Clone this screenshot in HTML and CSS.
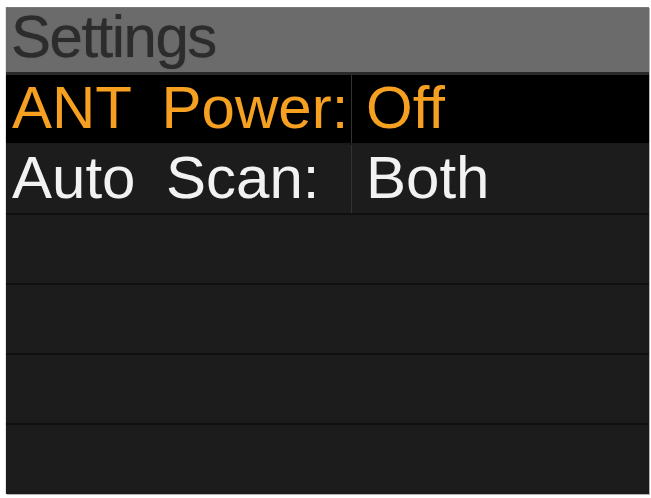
FILE: index.html
```html
<!DOCTYPE html>
<html lang="en">
<head>
    <meta charset="UTF-8">
    <meta name="viewport" content="width=device-width, initial-scale=1.0">
    <title>Settings</title>
    <link rel="stylesheet" href="styles.css">
</head>
<body>
    <div class="screen">
        <div class="title-bar">Settings</div>

        <ul class="menu">
            <li class="menu-row selected">
                <span class="label">ANT Power:</span>
                <span class="value">Off</span>
            </li>
            <li class="menu-row">
                <span class="label">Auto Scan:</span>
                <span class="value">Both</span>
            </li>
            <!-- unused slots -->
            <li class="menu-row empty"></li>
            <li class="menu-row empty"></li>
            <li class="menu-row empty"></li>
            <li class="menu-row empty last"></li>
        </ul>
    </div>
</body>
</html>
```

FILE: styles.css
```css
* {
    margin: 0;
    padding: 0;
    box-sizing: border-box;
}

body {
    background: #ffffff;
    font-family: 'Liberation Sans', Arial, sans-serif;
    padding: 7px 2px 4px 6px;
}

.screen {
    width: 643px;
    height: 487px;
    background: #1c1c1c;
    display: flex;
    flex-direction: column;
    box-shadow: 1px 1px 0 #b4b4b4, -1px 0 0 #e2e2e2;
}

.title-bar {
    height: 68px;
    background: #6b6b6b;
    border-top: 1px solid #7a7a7a;
    border-bottom: 3px solid #2a2a2a;
    color: #2c2c2c;
    font-size: 60px;
    line-height: 58px;
    letter-spacing: -1.5px;
    padding-left: 5px;
    text-shadow: 0 0 1px #3a3a3a;
}

.menu {
    list-style: none;
    flex: 1;
    display: flex;
    flex-direction: column;
}

.menu-row {
    height: 70px;
    display: flex;
    border-bottom: 2px solid #101010;
    color: #f2f2f2;
    font-size: 60px;
    line-height: 66px;
    word-spacing: 14px;
}

.menu-row.selected {
    background: #000000;
    color: #f5a020;
    border-bottom-color: #1a1a1a;
}

.menu-row.last {
    flex: 1;
    border-bottom: none;
}

.label {
    width: 346px;
    padding-left: 6px;
    border-right: 1px solid #333333;
    white-space: nowrap;
}

.value {
    padding-left: 14px;
}
```
